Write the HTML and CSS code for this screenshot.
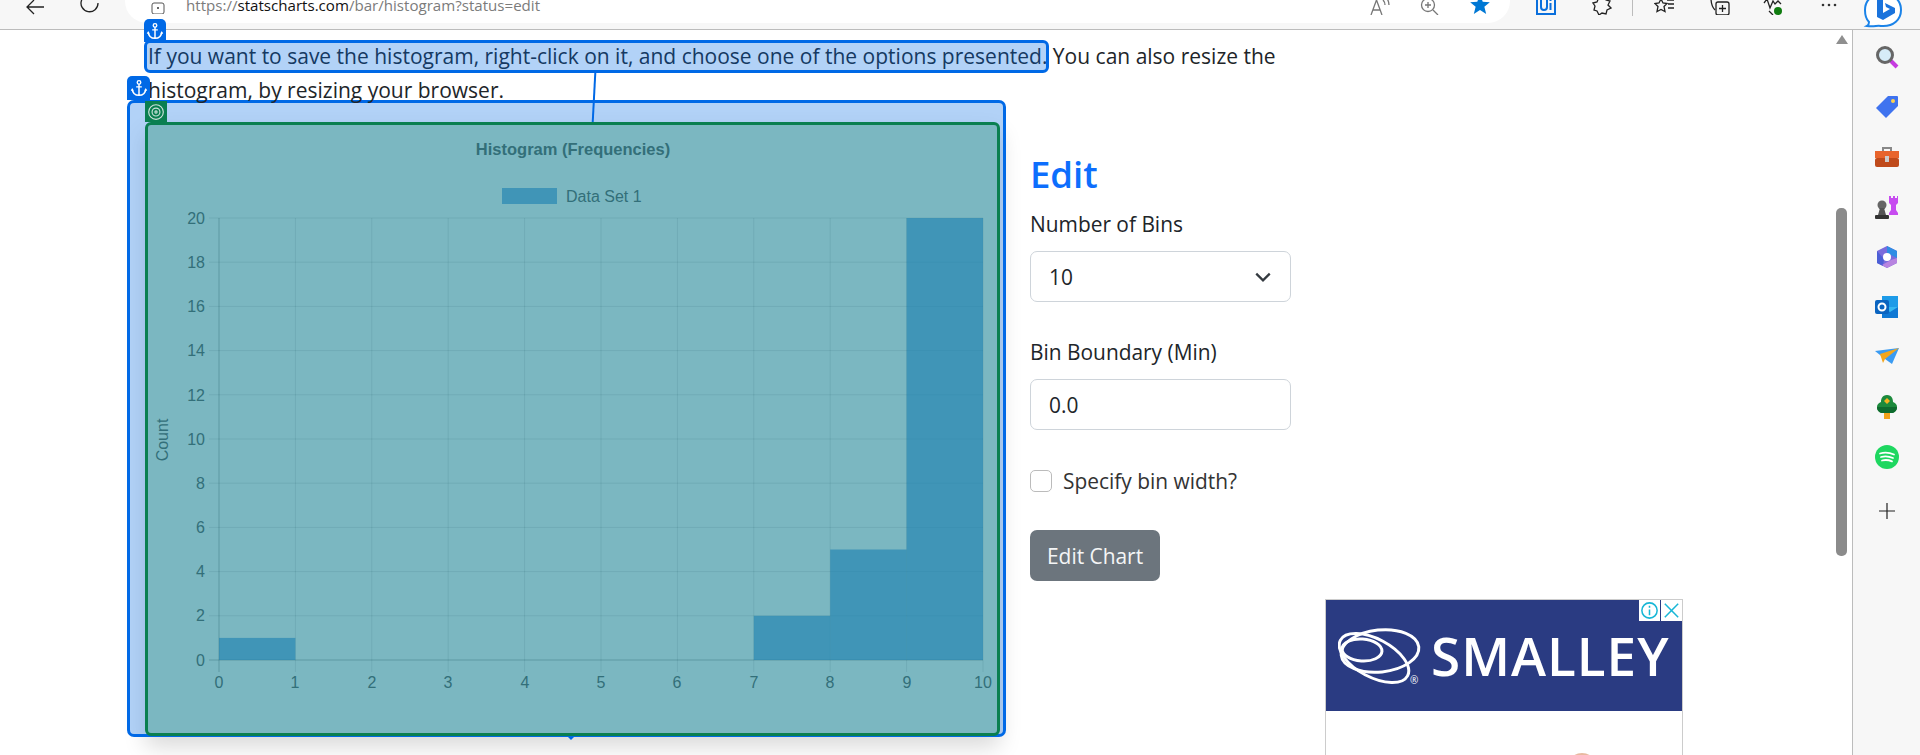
FILE: index.html
```html
<!DOCTYPE html>
<html lang="en">
  <head>
    <meta charset="utf-8">
    <title>Histogram - statscharts.com</title>
    <link rel="stylesheet" href="styles.css">
  </head>
  <body>
    <header class="toolbar">
      <svg class="tb-icon back" viewBox="0 0 20 24"><path d="M19 16H2M9 9l-7 7 7 7" /></svg>
      <svg class="tb-icon reload" viewBox="0 0 20 24"><path d="M14 5a8.5 8.5 0 1 0 4 7" /><path d="M18 3v5h-5" /></svg>
      <div class="address">
        <svg class="site-icon" viewBox="0 0 14 24"><rect x="1" y="13" width="12" height="11" rx="2" /><circle cx="7" cy="18" r="1" class="solid" /></svg>
        <span class="url">https://<b>statscharts.com</b>/bar/histogram?status=edit</span>
        <div class="address-tools">
          <svg class="tb-icon grey" viewBox="0 0 20 24"><path d="M1 24 6.5 9 12 24M3 19h7" /><path d="M13 9q2 2 2 5M16.500 7q2.500 3 2.500 7" /></svg>
          <svg class="tb-icon grey" viewBox="0 0 20 24"><circle cx="8" cy="14" r="6.500" /><path d="M13 19l5 5M5 14h6M8 11v6" /></svg>
          <svg class="tb-icon" viewBox="0 0 22 24"><path class="star" d="M11 3l3 7.500 7.800.6-6 5 2 7.900-6.800-4.300-6.800 4.300 2-7.900-6-5 7.800-.6z" /></svg>
        </div>
      </div>
      <div class="extensions">
        <svg class="tb-icon" viewBox="0 0 20 24"><rect x="1" y="1" width="18" height="22" fill="none" stroke="#0a6fdc" stroke-width="2" /><path d="M5 9v7q0 3 3 3t3-3V9M14.500 12v7M14.500 8v2" stroke="#0a6fdc" stroke-width="2" /></svg>
        <svg class="tb-icon" viewBox="0 0 20 24"><path d="M7 6h6l1 3 4 1-2 4 3 3-4 2-1 4-4-1-3 2-2-4-3-1 1-4-2-3 4-1z" /></svg>
        <span class="divider"></span>
        <svg class="tb-icon" viewBox="0 0 20 24"><path d="M7 8l2 4 4 .500-3 3 1 5-4-2-4 2 1-5-3-3 4-.500zM13 9h7M14 13h6M14 17h6" /></svg>
        <svg class="tb-icon" viewBox="0 0 20 24"><rect x="6" y="11" width="13" height="13" rx="2" /><path d="M12.500 14v7M9 17.500h7M1 7q0 8 4 12" /></svg>
        <svg class="tb-icon pulse" viewBox="0 0 20 24"><path d="M1 12l3-4 3 9 3-7 2 3 3-3 3 3M6 20l4 4" /><circle class="ok" cx="15" cy="20" r="4" /></svg>
        <svg class="tb-icon dots" viewBox="0 0 20 24"><circle class="solid" cx="4" cy="14" r="1.300" /><circle class="solid" cx="10" cy="14" r="1.300" /><circle class="solid" cx="16" cy="14" r="1.300" /></svg>
        <svg class="bing" viewBox="0 0 40 32"><path d="M20 -6C8 -6 2 1 2 10c0 6 2 10 4 12q0 3-2 4c8 1 10-1 14 0 13 1 20-7 20-16C38 1 32-6 20-6z" fill="#fff" stroke="#1b83e8" stroke-width="2" /><path d="M14 -4l6 2v15l7-4-4-2-1-4 10 5v5l-12 7-6-3z" fill="#1a73dc" /></svg>
      </div>
    </header>

    <div class="browser">
      <main class="page">
        <p class="intro"><span class="picked">If you want to save the histogram, right-click on it, and choose one of the options presented.<i class="tab tab-blue tab-text"><svg viewBox="0 0 16 16"><use href="#anchor" /></svg></i></span> You can also resize the histogram, by resizing your browser.</p>

        <div class="columns">
          <div class="chart-card">
            <svg class="chart" viewBox="0 0 855 613">
              <text class="chart-title" x="428" y="33">Histogram (Frequencies)</text>
              <rect class="bar" x="357" y="66" width="55" height="16" />
              <text class="tick" x="421" y="80">Data Set 1</text>
              <path class="grid" d="M64 96H838M64 140.200H838M64 184.400H838M64 228.600H838M64 272.800H838M64 317H838M64 361.200H838M64 405.400H838M64 449.600H838M64 493.800H838" />
              <path class="grid" d="M150.400 96V550M226.800 96V550M303.200 96V550M379.600 96V550M456 96V550M532.400 96V550M608.800 96V550M685.200 96V550M761.600 96V550M838 96V550" />
              <path class="axis" d="M64 538H838M74 96V550" />
              <rect class="bar" x="74" y="515.900" width="76.400" height="22.100" />
              <rect class="bar" x="608.800" y="493.800" width="76.400" height="44.200" />
              <rect class="bar" x="685.200" y="427.500" width="76.400" height="110.500" />
              <rect class="bar" x="761.600" y="96" width="76.400" height="442" />
              <g class="tick y-ticks">
                <text x="60" y="102">20</text><text x="60" y="146">18</text><text x="60" y="190">16</text>
                <text x="60" y="234">14</text><text x="60" y="279">12</text><text x="60" y="323">10</text>
                <text x="60" y="367">8</text><text x="60" y="411">6</text><text x="60" y="455">4</text>
                <text x="60" y="499">2</text><text x="60" y="544">0</text>
              </g>
              <g class="tick x-ticks">
                <text x="74" y="566">0</text><text x="150" y="566">1</text><text x="227" y="566">2</text>
                <text x="303" y="566">3</text><text x="380" y="566">4</text><text x="456" y="566">5</text>
                <text x="532" y="566">6</text><text x="609" y="566">7</text><text x="685" y="566">8</text>
                <text x="762" y="566">9</text><text x="838" y="566">10</text>
              </g>
              <text class="tick" transform="translate(23 318) rotate(-90)" text-anchor="middle">Count</text>
            </svg>

            <div class="outline-blue">
              <i class="tab tab-blue tab-card"><svg viewBox="0 0 16 16"><use href="#anchor" /></svg></i>
              <i class="nub"></i>
            </div>
            <div class="connector"></div>
            <div class="outline-green">
              <i class="tab tab-green"><svg viewBox="0 0 16 16"><circle cx="8" cy="8" r="6.500" /><circle cx="8" cy="8" r="3.500" /><circle cx="8" cy="8" r="1" /></svg></i>
            </div>
          </div>

          <form class="edit-form">
            <h1>Edit</h1>
            <label class="field-label">Number of Bins</label>
            <div class="control select">10
              <svg viewBox="0 0 16 16"><path d="M2 5l6 6 6-6" /></svg>
            </div>
            <label class="field-label">Bin Boundary (Min)</label>
            <div class="control">0.0</div>
            <div class="check-row"><span class="check-box"></span>Specify bin width?</div>
            <span class="btn">Edit Chart</span>
          </form>

          <aside class="ad">
            <div class="ad-banner">
              <svg class="ad-logo" viewBox="0 0 84 64">
                <ellipse cx="42" cy="27" rx="39" ry="21" transform="rotate(-6 42 27)" />
                <ellipse cx="36" cy="34" rx="38" ry="19" transform="rotate(28 36 34)" />
                <ellipse cx="24" cy="26" rx="20" ry="11" transform="rotate(4 24 26)" />
              </svg>
              <span class="ad-reg">®</span>
              <span class="ad-name">SMALLEY</span>
              <div class="ad-choices">
                <span><svg viewBox="0 0 22 22"><circle cx="11" cy="11" r="8" /><path d="M11 10v6M11 6v2" /></svg></span>
                <span><svg viewBox="0 0 22 22"><path d="M4 4l14 14M18 4 4 18" /></svg></span>
              </div>
            </div>
            <div class="ad-body"><span class="ad-arc"></span></div>
          </aside>
        </div>
      </main>

      <div class="scrollbar">
        <span class="scroll-up"></span>
        <span class="scroll-thumb"></span>
      </div>

      <nav class="sidebar">
        <svg viewBox="0 0 24 24"><path d="M15 15l7 7" stroke="#c63be0" stroke-width="4" /><circle cx="10" cy="10" r="7.500" fill="#d6ecf8" stroke="#666" stroke-width="3" /></svg>
        <svg viewBox="0 0 24 24"><path d="M13 1h9a1 1 0 0 1 1 1v9L11 23 1 13z" fill="#3f73ef" /><circle cx="18" cy="6" r="2" fill="#ffd24d" /></svg>
        <svg viewBox="0 0 24 24"><path d="M8 6V3h8v3" fill="none" stroke="#888" stroke-width="2" /><rect y="6" width="24" height="7" fill="#e8642c" /><rect y="13" width="24" height="9" rx="2" fill="#bf4a1b" /><rect x="10" y="11" width="4" height="6" fill="#ccc" /></svg>
        <svg viewBox="0 0 24 24"><path d="M14 1h2v2h2V1h2v2h2V1h1v7l-2 2v5l2 3v2h-9v-2l2-3v-5l-2-2z" fill="#c74cf0" /><circle cx="7" cy="10" r="4.500" fill="#666" /><path d="M5 13h4l2 7H3z" fill="#555" /><rect x="0" y="20" width="14" height="4" rx="1" fill="#333" /></svg>
        <svg viewBox="0 0 24 24"><path d="M12 1l10 5v12l-10 5-10-5V6z" fill="#7a6cdc" /><path d="M12 1l10 5v7l-6-3-4-2z" fill="#2f8de4" /><path d="M2 6v12l6 3 1-7z" fill="#4c5fd6" /><path d="M22 13v5l-10 5-5-3 9-5z" fill="#b884e0" /><circle cx="12" cy="12" r="4" fill="#fff" /></svg>
        <svg viewBox="0 0 24 24"><rect x="7" y="1" width="16" height="11" fill="#1e9be8" /><path d="M7 12h16v11H7z" fill="#35b8f1" /><path d="M7 12l8 5 8-5v11H7z" fill="#0f78d4" /><rect y="5" width="14" height="14" rx="2" fill="#0a64c0" /><circle cx="7" cy="12" r="3.500" fill="none" stroke="#fff" stroke-width="2" /></svg>
        <svg viewBox="0 0 24 24"><path d="M0 6l24-3-7 16-7-5z" fill="#3a9bf2" /><path d="M5 9l19-6-14 11-2 4z" fill="#f2a61c" /></svg>
        <svg viewBox="0 0 24 24"><rect x="9" y="16" width="6" height="8" fill="#f2a31c" /><path d="M12 0c5 0 6 4 6 7 3 1 4 3 4 5 0 4-3 6-6 6H8c-3 0-6-2-6-6 0-2 1-4 4-5 0-3 1-7 6-7z" fill="#1c8a3c" /><path d="M2 12c0 4 3 6 6 6h8c3 0 6-2 6-6z" fill="#0e6b2e" /><path d="M12 3l3 3-3 3-3-3z" fill="#f5b21f" /></svg>
        <svg viewBox="0 0 24 24"><circle cx="12" cy="12" r="12" fill="#1ed760" /><path d="M5 8.500q7-2 14 1M6 12q6-1.600 12 1M7 15.500q5-1.300 10 .8" fill="none" stroke="#fff" stroke-width="1.800" stroke-linecap="round" /></svg>
        <svg class="add" viewBox="0 0 24 24"><path d="M12 4v16M4 12h16" fill="none" stroke="#222" stroke-width="1.200" /></svg>
      </nav>
    </div>

    <svg class="sprites">
      <symbol id="anchor" viewBox="0 0 16 16">
        <circle cx="8" cy="3" r="1.600" fill="none" stroke="#fff" stroke-width="1.200" />
        <path d="M8 4.500V14.500M5.500 7h5M2 9q.5 5.500 6 5.500T14 9" fill="none" stroke="#fff" stroke-width="1.300" />
        <path d="M2 8 .7 10.500h2.600zM14 8l-1.300 2.500h2.600z" fill="#fff" />
      </symbol>
    </svg>
  </body>
</html>
```

FILE: styles.css
```css
/* reset/general */
* { box-sizing: border-box; }
html, body { height: 100%; }
body { margin: 0; overflow: hidden; background: #fff; color: #212529; font-family: "Open Sans", "Noto Sans", sans-serif; }
.sprites { display: none; }

/* browser toolbar */
.toolbar { display: flex; align-items: flex-start; height: 30px; padding-left: 25px; overflow: hidden; background: #f7f7f7; border-bottom: 1px solid #bcbcbc; }
.tb-icon { flex: none; width: 20px; height: 24px; margin-top: -9px; fill: none; stroke: #222; stroke-width: 1.300; }
.tb-icon.grey { stroke: #777; }
.tb-icon .solid, .site-icon .solid { fill: #333; stroke: none; }
.tb-icon .star { fill: #0078d4; stroke: none; }
.tb-icon .ok { fill: #107c10; stroke: none; }
.back { margin-right: 35px; }
.reload { margin-right: 25px; }
.address { flex: none; display: flex; width: 1385px; height: 23px; padding-left: 26px; background: #fff; border-radius: 0 0 22px 22px; }
.site-icon { flex: none; width: 14px; height: 24px; margin-top: -10px; margin-right: 21px; fill: none; stroke: #555; }
.url { margin-top: -5px; font-size: 15.100px; line-height: 21px; color: #7b7b7b; white-space: nowrap; }
.url b { font-weight: 400; color: #111; }
.address-tools { display: flex; gap: 30px; margin-left: auto; padding-right: 20px; }
.extensions { display: flex; gap: 36px; margin-left: 26px; }
.divider { flex: none; width: 1px; height: 16px; margin: 0 -15px 0 -16px; background: #bcbcbc; }
.pulse { margin-left: -3px; }
.bing { flex: none; width: 40px; height: 32px; margin: 0 0 0 -12px; overflow: visible; }

/* browser body */
.browser { display: flex; height: 725px; }
.page { flex: 1; min-width: 0; padding: 10px 0 0 145px; }
.scrollbar { flex: none; position: relative; width: 19px; background: #fff; }
.scroll-up { position: absolute; left: 3px; top: 5px; border: 6px solid transparent; border-top: 0; border-bottom: 9px solid #8f8f8f; }
.scroll-thumb { position: absolute; left: 3px; top: 178px; width: 11px; height: 348px; background: #8b8b8b; border-radius: 5px; }
.sidebar { flex: none; display: flex; flex-direction: column; align-items: center; gap: 26px; width: 68px; padding-top: 15px; background: #f7f7f7; border-left: 1px solid #bcbcbc; }
.sidebar svg { flex: none; width: 24px; height: 24px; overflow: visible; }
.sidebar .add { margin-top: 4px; }

/* text and picked sentence */
.intro { position: relative; z-index: 1; width: 1135px; height: 67px; margin: 0; padding-left: 3px; font-size: 21px; line-height: 33.500px; }
.picked { position: relative; }
.picked::after { content: ""; position: absolute; left: -4px; right: -2px; top: -2px; bottom: -3px; background: rgba(0, 105, 230, .3); border: 3px solid #0069e6; border-radius: 6px; }
.tab { position: absolute; display: flex; align-items: center; justify-content: center; color: #fff; z-index: 2; }
.tab svg { width: 18px; height: 18px; }
.tab-blue { background: #0069e6; border-radius: 5px 5px 0 0; }
.tab-text { left: -4px; bottom: 100%; width: 22px; height: 23px; margin-bottom: 0; }
.tab-card { left: -3px; top: -27px; width: 23px; height: 24px; }
.tab-green { left: -3px; top: -24px; width: 22px; height: 21px; background: #0a7f50; }
.tab-green svg { fill: none; stroke: #cfe3dc; stroke-width: 1; }

/* columns */
.columns { display: flex; align-items: flex-start; margin-top: 15px; }

/* chart */
.chart-card { flex: none; position: relative; width: 855px; height: 614px; background: #fff; border-radius: 6px; box-shadow: 0 11px 22px rgba(0, 0, 0, .15); }
.chart { display: block; width: 855px; height: 613px; font-family: "Liberation Sans", Arial, sans-serif; }
.chart-title { font-size: 16.500px; font-weight: 700; fill: #666; text-anchor: middle; }
.tick { font-size: 16px; fill: #666; }
.y-ticks { text-anchor: end; }
.x-ticks { text-anchor: middle; }
.grid { fill: none; stroke: rgba(0, 0, 0, .1); stroke-width: 1; }
.axis { fill: none; stroke: rgba(0, 0, 0, .25); stroke-width: 1; }
.bar { fill: rgba(47, 137, 220, .6); }

/* picker overlays on the chart */
.outline-blue { position: absolute; left: -18px; top: -22px; right: -6px; bottom: -1px; background: rgba(0, 105, 230, .3); border: 3px solid #0069e6; border-radius: 7px; }
.outline-green { position: absolute; inset: 0; background: rgba(10, 127, 80, .32); border: 3px solid #0a7f50; border-radius: 6px; }
.connector { position: absolute; left: 448px; top: -49px; width: 2px; height: 49px; background: #0069e6; transform: rotate(3deg); }
.nub { position: absolute; left: 438px; bottom: -9px; border: 3px solid transparent; border-top: 3px solid #0069e6; }

/* edit form */
.edit-form { flex: none; width: 261px; margin: 29px 0 0 30px; font-size: 20.900px; }
.edit-form h1 { margin: 0 0 11px; font-size: 36.500px; font-weight: 600; line-height: 46px; color: #0d6efd; }
.field-label { display: block; line-height: 33px; margin-bottom: 10px; }
.control { position: relative; display: flex; align-items: center; height: 51px; margin-bottom: 34px; padding-left: 18px; background: #fff; border: 1px solid #ced4da; border-radius: 7px; }
.select { justify-content: space-between; padding-right: 18px; }
.select svg { width: 18px; height: 18px; fill: none; stroke: #343a40; stroke-width: 2; }
.check-row { display: flex; align-items: center; gap: 11px; height: 33px; margin: 0 0 33px; color: #333; }
.check-box { flex: none; width: 22px; height: 22px; background: #fff; border: 1px solid #bbb; border-radius: 5px; }
.btn { display: inline-flex; align-items: center; height: 51px; padding: 0 17px; background: #6c757d; color: #f4f5f6; border-radius: 7px; }

/* advert, cut off by the window */
.ad { flex: none; width: 358px; height: 156px; margin: 477px 0 0 34px; overflow: hidden; border: 1px solid #ccc; border-bottom: 0; }
.ad-banner { position: relative; display: flex; align-items: center; height: 111px; padding-left: 12px; background: #2a3b82; color: #fff; }
.ad-logo { flex: none; width: 84px; height: 64px; fill: none; stroke: #fff; stroke-width: 3; }
.ad-reg { position: absolute; left: 84px; top: 73px; font-size: 10px; }
.ad-name { margin-left: 9px; font-size: 53px; font-weight: 600; line-height: 60px; letter-spacing: 1px; }
.ad-choices { position: absolute; right: 0; top: 0; display: flex; gap: 1px; }
.ad-choices span { display: flex; width: 21px; height: 21px; background: #fff; }
.ad-choices svg { width: 21px; height: 21px; fill: none; stroke: #18b7d6; stroke-width: 1.600; }
.ad-body { padding: 42px 0 0 241px; }
.ad-arc { display: block; width: 30px; height: 30px; background: #e8b9a0; border-radius: 50%; }
```
